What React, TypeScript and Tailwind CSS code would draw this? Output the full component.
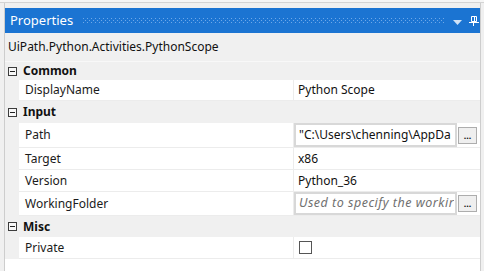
import type { ReactNode } from 'react';

const font = "font-['Noto_Sans',sans-serif]";

const Category = ({ label, height }: { label: string; height: string }) => (
  <div className={`flex items-center bg-[#f0f0f0] ${height}`}>
    <div className="ml-[3px] flex h-[9px] w-[9px] items-center justify-center border border-[#3c3c3c] bg-[#f7f7f7]">
      <div className="h-px w-[5px] bg-[#222]" />
    </div>
    <span className="ml-[6px] text-[12px] font-bold text-[#111]">{label}</span>
  </div>
);

const Row = ({ name, height, children }: { name: string; height: string; children: ReactNode }) => (
  <div className={`flex ${height}`}>
    <div className="w-[14px] shrink-0 bg-[#f0f0f0]" />
    <div className="flex w-[275px] shrink-0 items-center border-b border-r border-[#ececec] bg-white pl-[6px] text-[12px] text-[#1b1b1b]">
      {name}
    </div>
    <div className="flex min-w-0 flex-1 items-center border-b border-[#ececec] bg-white text-[12px] text-[#111]">
      {children}
    </div>
  </div>
);

const EditBox = ({ text, placeholder, height }: { text: string; placeholder?: boolean; height: string }) => (
  <div className="flex items-center">
    <div
      className={`flex w-[163px] items-center overflow-hidden whitespace-nowrap border-2 border-[#d8d8d8] bg-white pl-[3px] ${height} ${
        placeholder ? 'text-[12.5px] italic tracking-[0.5px] text-[#707070]' : 'text-[#111]'
      }`}
    >
      <span className="overflow-hidden">{text}</span>
    </div>
    <div className="ml-px flex h-[17px] w-[19px] items-end justify-center border border-[#adadad] bg-[#efefef] pb-[3px] text-[9px] font-bold leading-none text-[#111]">
      ...
    </div>
  </div>
);

export default function App() {
  return (
    <div className={`h-[271px] w-[484px] overflow-hidden bg-[#f0f0f0] ${font}`}>
      <div className="h-[2px] bg-[#f6f6f6]" />
      <div className="flex h-[269px] border-t border-[#d4d4d4]">
        <div className="ml-[4px] flex w-[477px] flex-col border-x border-[#cdcdcd] pt-[5px]">
          {/* title bar */}
          <div className="flex h-[25px] shrink-0 items-center bg-[#1b74d2] pl-[5px]">
            <span className="text-[13px] text-white">Properties</span>
            <svg className="ml-[10px]" width="361" height="5">
              <defs>
                <pattern id="grip" width="4" height="4" patternUnits="userSpaceOnUse">
                  <rect x="0" y="0" width="1" height="1" fill="#6ea8e8" />
                  <rect x="2" y="2" width="1" height="1" fill="#6ea8e8" />
                </pattern>
              </defs>
              <rect width="361" height="5" fill="url(#grip)" />
            </svg>
            <svg className="ml-[9px] mt-[3px]" width="9" height="5" viewBox="0 0 9 5">
              <path d="M0 0H9L4.5 5Z" fill="#cfe2f7" />
            </svg>
            <svg className="ml-[7px]" width="10" height="10" viewBox="0 0 10 10">
              <path d="M2.5 0.5H7.5V5.5H2.5Z" fill="none" stroke="#fff" />
              <path d="M5.5 1V5" stroke="#fff" />
              <path d="M0 6.5H10" stroke="#fff" />
              <path d="M4.5 7V10" stroke="#fff" />
            </svg>
          </div>

          {/* selected type */}
          <div className="flex h-[28px] shrink-0 items-center pl-[3px] text-[12px] text-[#111]">
            UiPath.Python.Activities.PythonScope
          </div>
          <div className="h-px shrink-0 bg-[#f8f8f8]" />

          <div className="flex-1 bg-white">
            <Category label="Common" height="h-[18px]" />
            <Row name="DisplayName" height="h-[21px]">
              <span className="pl-[4px]">Python Scope</span>
            </Row>

            <Category label="Input" height="h-[22px]" />
            <Row name="Path" height="h-[25px]">
              <EditBox text={'"C:\\Users\\chenning\\AppDa'} height="h-[24px]" />
            </Row>
            <Row name="Target" height="h-[22px]">
              <span className="pl-[4px]">x86</span>
            </Row>
            <Row name="Version" height="h-[22px]">
              <span className="pl-[4px]">Python_36</span>
            </Row>
            <Row name="WorkingFolder" height="h-[24px]">
              <EditBox text="Used to specify the workir" placeholder height="h-[23px]" />
            </Row>

            <Category label="Misc" height="h-[21px]" />
            <Row name="Private" height="h-[22px]">
              <div className="ml-[5px] h-[13px] w-[13px] border border-[#555] bg-white" />
            </Row>
          </div>
        </div>
      </div>
    </div>
  );
}
